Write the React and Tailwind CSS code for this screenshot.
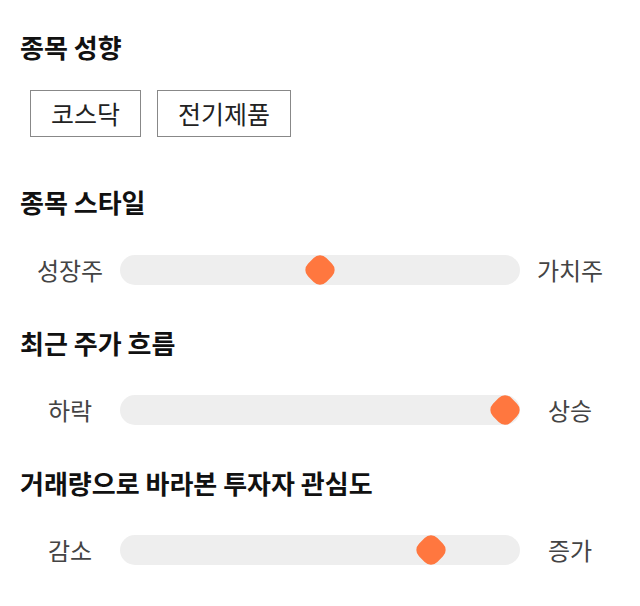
import React from "react";

const font = { fontFamily: '"Noto Sans CJK KR", "Noto Sans", sans-serif' };

function Heading({ children, className = "" }) {
  return (
    <h2 className={`text-[26px] leading-[36px] font-bold text-[#111] ${className}`}>
      {children}
    </h2>
  );
}

function Slider({ left, right, value, className = "" }) {
  return (
    <div className={`flex items-center ${className}`}>
      <div className="w-[100px] text-center text-[24px] leading-[30px] text-[#444]">{left}</div>
      <div className="relative h-[30px] w-[400px] rounded-full bg-[#eeeeee]">
        <div
          className="absolute top-0 flex h-[30px] w-[30px] items-center justify-center"
          style={{ left: `calc((100% - 30px) * ${value / 100})` }}
        >
          <div className="h-[26px] w-[26px] rotate-45 rounded-[9px] bg-[#ff773f]" />
        </div>
      </div>
      <div className="w-[100px] text-center text-[24px] leading-[30px] text-[#444]">{right}</div>
    </div>
  );
}

export default function App() {
  return (
    <div className="min-h-[606px] w-[640px] bg-white px-5 pt-[29px]" style={font}>
      <Heading>종목 성향</Heading>
      <div className="mt-[25px] ml-[10px] flex gap-4">
        <div className="flex h-[47px] items-center border border-[#888] px-5 text-[25px] text-[#222]">코스닥</div>
        <div className="flex h-[47px] items-center border border-[#888] px-5 text-[25px] text-[#222]">전기제품</div>
      </div>
      <Heading className="mt-[47px]">종목 스타일</Heading>
      <Slider className="mt-[35px]" left="성장주" right="가치주" value={50} />
      <Heading className="mt-[40px]">최근 주가 흐름</Heading>
      <Slider className="mt-[34px]" left="하락" right="상승" value={100} />
      <Heading className="mt-[40px]">거래량으로 바라본 투자자 관심도</Heading>
      <Slider className="mt-[34px]" left="감소" right="증가" value={80} />
    </div>
  );
}
